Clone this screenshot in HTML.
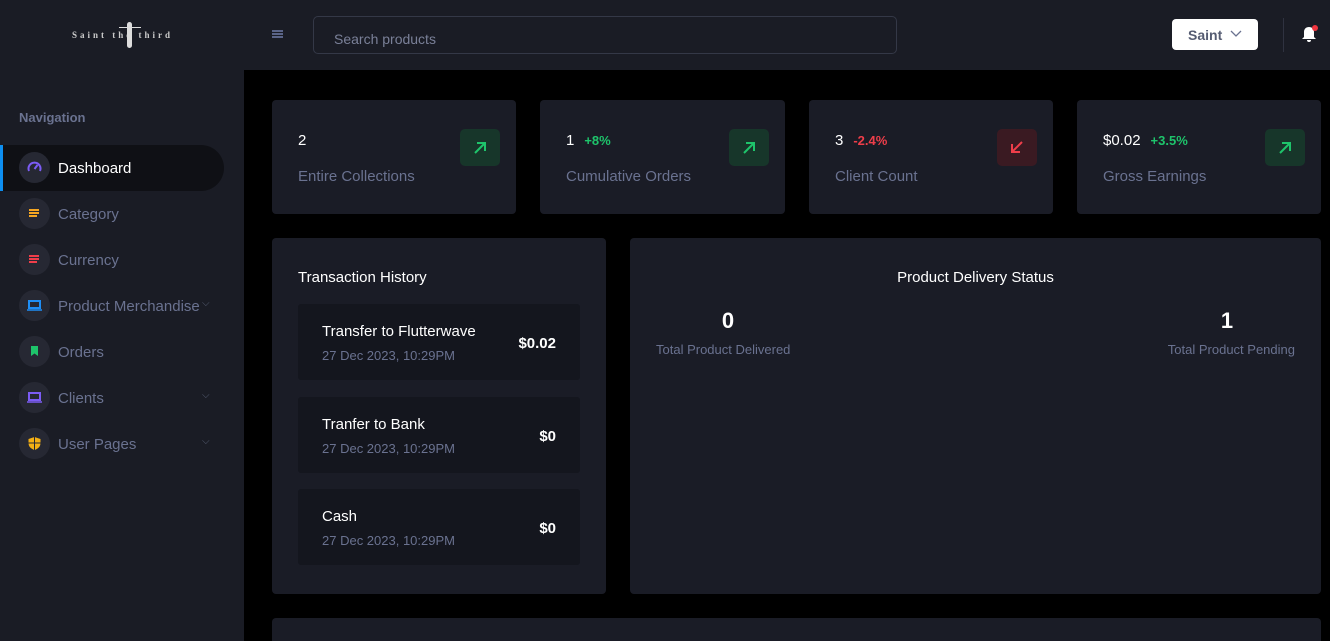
<!DOCTYPE html><html><head><style>
*{box-sizing:border-box;margin:0;padding:0}
html,body{width:1330px;height:641px;overflow:hidden}
body{background:#000;font-family:"Liberation Sans",sans-serif;position:relative}
.hdr{position:absolute;left:0;top:0;width:1330px;height:70px;background:#1a1c25}
.side{position:absolute;left:0;top:70px;width:244px;height:571px;background:#1a1c25}
.card{position:absolute;background:#1a1c26;border-radius:4px}
.abs{position:absolute}
.nav{position:absolute;left:0;width:224px;height:46px}
.ic{position:absolute;left:19px;top:7px;width:31px;height:31px;border-radius:50%;background:#262833}
.nt{position:absolute;left:58px;top:15px;font-size:15px;color:#6a7290}
.chev{position:absolute;left:202px;top:15px;color:#555c72;font-size:10px}
.stat .n{position:absolute;left:26px;top:32px;color:#fff;font-size:15px}
.stat .p{font-size:13px;margin-left:10px;font-weight:bold}
.stat .l{position:absolute;left:26px;top:68px;color:#6a7290;font-size:15px}
.stat .b{position:absolute;right:16px;top:29px;width:40px;height:37px;border-radius:5px;background:#17362a}
.tx{position:absolute;left:26px;width:282px;height:76px;background:#14161e;border-radius:3px}
.tx .a{position:absolute;left:24px;top:19px;color:#fff;font-size:15px}
.tx .d{position:absolute;left:24px;top:44px;color:#6a7290;font-size:13px}
.tx .v{position:absolute;right:24px;top:31px;color:#fff;font-size:15px;font-weight:bold}
</style></head><body>
<div class="hdr">
<div class="abs" style="left:72px;top:30px;color:#ccc;font-size:9px;font-weight:bold;letter-spacing:3px;font-family:'Liberation Serif',serif">Saint the third</div>
<div class="abs" style="left:127px;top:22px;width:5px;height:26px;background:#ddd;border-radius:3px"></div>
<div class="abs" style="left:119px;top:27px;width:22px;height:1px;background:#ddd"></div>
<div class="abs" style="left:272px;top:30px;width:11px;height:2px;background:#5a6488;box-shadow:0 3px 0 #5a6488,0 6px 0 #5a6488"></div>
<div class="abs" style="left:313px;top:16px;width:584px;height:38px;border:1px solid #343847;border-radius:5px;background:#1a1c25"><span class="abs" style="left:20px;top:14px;font-size:14px;color:#7a8098">Search products</span></div>
<div class="abs" style="left:1172px;top:19px;width:86px;height:31px;background:#fff;border-radius:4px"><span class="abs" style="left:16px;top:8px;font-size:14px;color:#555c72;font-weight:bold">Saint</span><svg class="abs" style="left:58px;top:11px" width="12" height="8"><path d="M1 1l5 5 5-5" stroke="#6a7290" fill="none" stroke-width="1.3"/></svg></div>
<div class="abs" style="left:1283px;top:18px;width:1px;height:34px;background:#2f3240"></div>
<svg class="abs" style="left:1300px;top:25px" width="18" height="18"><path d="M9 2c-3 0-5 2-5 5v5l-2 2h14l-2-2V7c0-3-2-5-5-5zM7 15a2 2 0 004 0z" fill="#fff"/><circle cx="15" cy="3" r="3" fill="#f0353f"/></svg>
</div>
<div class="side">
<div class="abs" style="left:19px;top:40px;font-size:13px;color:#6a7290;font-weight:bold">Navigation</div>
<div class="nav" style="top:75px;background:#0f1015;border-radius:0 23px 23px 0;border-left:3px solid #0d8ef0"><div class="ic" style="left:16px"><svg width="31" height="31"><path d="M10 19a6 6 0 1111 0" stroke="#7c5cf5" stroke-width="2" fill="none"/><path d="M15.5 17l3-4" stroke="#7c5cf5" stroke-width="2"/></svg></div><span class="nt" style="left:55px;color:#fff">Dashboard</span></div>
<div class="nav" style="top:121px"><div class="ic"><svg width="31" height="31"><path d="M10 12h10M10 15h10M10 18h8" stroke="#f5a623" stroke-width="2"/></svg></div><span class="nt">Category</span></div>
<div class="nav" style="top:167px"><div class="ic"><svg width="31" height="31"><path d="M10 12h10M10 15h10M10 18h8" stroke="#ef3e4a" stroke-width="2"/></svg></div><span class="nt">Currency</span></div>
<div class="nav" style="top:213px"><div class="ic"><svg width="31" height="31"><rect x="10" y="11" width="11" height="7" fill="none" stroke="#1e8ef5" stroke-width="2"/><path d="M8 20h15" stroke="#1e8ef5" stroke-width="1.5"/></svg></div><span class="nt">Product Merchandise</span><span class="chev">⌵</span></div>
<div class="nav" style="top:259px"><div class="ic"><svg width="31" height="31"><path d="M12 10h7v10l-3.5-2.5L12 20z" fill="#1ec46b"/></svg></div><span class="nt">Orders</span></div>
<div class="nav" style="top:305px"><div class="ic"><svg width="31" height="31"><rect x="10" y="11" width="11" height="7" fill="none" stroke="#7c5cf5" stroke-width="2"/><path d="M8 20h15" stroke="#7c5cf5" stroke-width="1.5"/></svg></div><span class="nt">Clients</span><span class="chev">⌵</span></div>
<div class="nav" style="top:351px"><div class="ic"><svg width="31" height="31"><path d="M15.5 9l6 2v4c0 4-3 6-6 7-3-1-6-3-6-7v-4z" fill="#f5b014"/><path d="M15.5 9v13M9.5 15h12" stroke="#262833" stroke-width="1"/></svg></div><span class="nt">User Pages</span><span class="chev">⌵</span></div>
</div>

<div class="card stat" style="left:272px;top:100px;width:244px;height:114px"><span class="n">2</span><span class="l">Entire Collections</span><div class="b"><svg width="40" height="37"><path d="M15 24l10-10M17 14h8v8" stroke="#1ec46b" stroke-width="2" fill="none"/></svg></div></div>
<div class="card stat" style="left:540px;top:100px;width:245px;height:114px"><span class="n">1<span class="p" style="color:#1ec46b">+8%</span></span><span class="l">Cumulative Orders</span><div class="b"><svg width="40" height="37"><path d="M15 24l10-10M17 14h8v8" stroke="#1ec46b" stroke-width="2" fill="none"/></svg></div></div>
<div class="card stat" style="left:809px;top:100px;width:244px;height:114px"><span class="n">3<span class="p" style="color:#ef3e4a">-2.4%</span></span><span class="l">Client Count</span><div class="b" style="background:#3a1a22"><svg width="40" height="37"><path d="M25 13L15 23M15 15v8h8" stroke="#ef3e4a" stroke-width="2" fill="none"/></svg></div></div>
<div class="card stat" style="left:1077px;top:100px;width:244px;height:114px"><span class="n">$0.02<span class="p" style="color:#1ec46b">+3.5%</span></span><span class="l">Gross Earnings</span><div class="b"><svg width="40" height="37"><path d="M15 24l10-10M17 14h8v8" stroke="#1ec46b" stroke-width="2" fill="none"/></svg></div></div>

<div class="card" style="left:272px;top:238px;width:334px;height:356px">
<div class="abs" style="left:26px;top:31px;color:#fff;font-size:15px">Transaction History</div>
<div class="tx" style="top:66px"><span class="a">Transfer to Flutterwave</span><span class="d">27 Dec 2023, 10:29PM</span><span class="v">$0.02</span></div>
<div class="tx" style="top:159px"><span class="a">Tranfer to Bank</span><span class="d">27 Dec 2023, 10:29PM</span><span class="v">$0</span></div>
<div class="tx" style="top:251px"><span class="a">Cash</span><span class="d">27 Dec 2023, 10:29PM</span><span class="v">$0</span></div>
</div>
<div class="card" style="left:630px;top:238px;width:691px;height:356px">
<div class="abs" style="left:0;width:691px;top:31px;text-align:center;color:#fff;font-size:15px">Product Delivery Status</div>
<div class="abs" style="left:26px;top:70px;width:144px;text-align:center;color:#fff;font-size:22px;font-weight:bold">0</div>
<div class="abs" style="left:26px;top:104px;color:#6a7290;font-size:13px">Total Product Delivered</div>
<div class="abs" style="right:26px;top:70px;width:136px;text-align:center;color:#fff;font-size:22px;font-weight:bold">1</div>
<div class="abs" style="right:26px;top:104px;color:#6a7290;font-size:13px">Total Product Pending</div>
</div>
<div class="card" style="left:272px;top:618px;width:1049px;height:23px;border-radius:4px 4px 0 0"></div>
</body></html>
